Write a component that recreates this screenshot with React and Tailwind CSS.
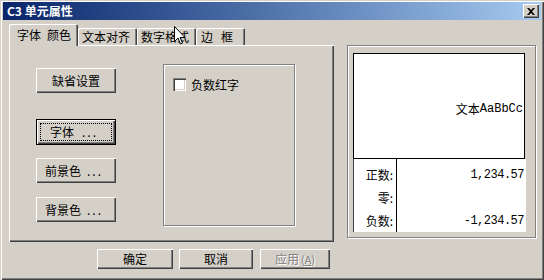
import React from "react";

const raised =
  "bg-[#d4d0c8] shadow-[inset_1px_1px_0_#ffffff,inset_-1px_-1px_0_#404040,inset_-2px_-2px_0_#808080]";
const cjk = "font-['Noto_Sans_CJK_SC','Noto_Sans_CJK_JP',sans-serif]";
const mono = "font-['Liberation_Mono',monospace]";

function Btn({ className = "", children, disabled }) {
  return (
    <div
      className={`${raised} flex items-center justify-center text-[12px] leading-none ${
        disabled ? "text-[#808080] [text-shadow:1px_1px_0_#ffffff]" : "text-black"
      } ${className}`}
    >
      {children}
    </div>
  );
}

function Tab({ children, active, className = "" }) {
  if (active) {
    return (
      <div
        className={`relative z-10 h-[22px] bg-[#d4d0c8] rounded-t-[2px] shadow-[inset_1px_1px_0_#ffffff,inset_-1px_0_0_#404040,inset_-2px_0_0_#808080] flex items-center pl-[8px] text-[12px] leading-none ${className}`}
      >
        {children}
      </div>
    );
  }
  return (
    <div
      className={`h-[17px] mb-[1px] bg-[#d4d0c8] rounded-t-[2px] shadow-[inset_1px_1px_0_#ffffff,inset_-1px_0_0_#404040,inset_-2px_0_0_#808080] flex items-center pl-[4px] text-[12px] leading-none ${className}`}
    >
      {children}
    </div>
  );
}

export default function App() {
  return (
    <div
      className={`relative w-[544px] h-[280px] bg-[#d4d0c8] pt-[2px] px-[3px] overflow-hidden text-black ${cjk} shadow-[inset_1px_1px_0_#d4d0c8,inset_2px_2px_0_#ffffff,inset_-1px_-1px_0_#404040,inset_-2px_-2px_0_#808080]`}
    >
      {/* title bar */}
      <div className="h-[18px] flex items-center justify-between bg-gradient-to-r from-[#0a246a] to-[#a6caf0] pl-[4px] pr-[2px]">
        <span className="text-white font-bold text-[12px] leading-none">C3 单元属性</span>
        <div className={`${raised} w-[16px] h-[14px] flex items-center justify-center`}>
          <svg width="8" height="7" viewBox="0 0 8 7">
            <path d="M0 0h2l2 2 2-2h2L5 3.5 8 7H6L4 5 2 7H0l3-3.5z" fill="#000" />
          </svg>
        </div>
      </div>

      <div className="flex items-start">
        {/* left: tab control */}
        <div className="ml-[6px] mt-[4px] flex flex-col">
          <div className="flex items-end h-[22px] -mb-[1px]">
            <Tab active className="w-[69px]">
              字体<span className="ml-[6px]">颜色</span>
            </Tab>
            <Tab className="w-[59px]">文本对齐</Tab>
            <Tab className="w-[59px]">数字格式</Tab>
            <Tab className="w-[49px] pl-[5px]">
              边<span className="ml-[8px]">框</span>
            </Tab>
          </div>
          <div className="w-[325px] h-[197px] bg-[#d4d0c8] shadow-[inset_1px_1px_0_#ffffff,inset_-1px_-1px_0_#404040,inset_-2px_-2px_0_#808080] flex">
            <div className="ml-[27px] mt-[23px] flex flex-col">
              <Btn className="w-[80px] h-[25px]">缺省设置</Btn>
              <div className="mt-[26px] w-[80px] h-[26px] border border-black">
                <div className={`${raised} w-full h-full p-[3px]`}>
                  <div className="w-full h-full border border-dotted border-black flex items-center pl-[9px] text-[12px] leading-none">
                    字体 <span className="ml-[8px] tracking-[2px]">...</span>
                  </div>
                </div>
              </div>
              <Btn className="mt-[13px] w-[80px] h-[25px] justify-start pl-[9px]">
                前景色 <span className="ml-[6px] tracking-[2px]">...</span>
              </Btn>
              <Btn className="mt-[14px] w-[80px] h-[25px] justify-start pl-[9px]">
                背景色 <span className="ml-[6px] tracking-[2px]">...</span>
              </Btn>
            </div>
            <div className="ml-[47px] mt-[19px] w-[132px] h-[162px] border border-[#808080] shadow-[inset_1px_1px_0_#ffffff,1px_1px_0_#ffffff]">
              <div className="flex items-center mt-[13px] ml-[9px]">
                <div className="w-[13px] h-[13px] bg-white shadow-[inset_1px_1px_0_#808080,inset_2px_2px_0_#404040,inset_-1px_-1px_0_#ffffff,inset_-2px_-2px_0_#d4d0c8]" />
                <span className="ml-[5px] text-[12px] leading-none">负数红字</span>
              </div>
            </div>
          </div>
        </div>

        {/* right: preview */}
        <div className="ml-[13px] mt-[25px] w-[189px] h-[193px] border border-[#808080] shadow-[inset_1px_1px_0_#ffffff,1px_1px_0_#ffffff] px-[5px] pt-[7px]">
          <div className="w-[172px] h-[106px] bg-white border border-black flex items-center justify-end pr-[1px] pt-[6px]">
            <span className="text-[12px] leading-none">文本</span>
            <span className={`${mono} text-[12px] leading-none`}>AaBbCc</span>
          </div>
          <div className="w-[173px] h-[73px] bg-white flex border-l border-[#404040]">
            <div className="w-[43px] border-r border-black flex flex-col items-end pr-[3px] pt-[4px]">
              <div className="h-[25px] flex items-center text-[12px] leading-none">正数:</div>
              <div className="h-[23px] flex items-center text-[12px] leading-none">零:</div>
              <div className="h-[23px] flex items-center text-[12px] leading-none">负数:</div>
            </div>
            <div className={`flex-1 flex flex-col items-end pr-[2px] pt-[4px] ${mono} text-[12px] tracking-[-0.5px] leading-none`}>
              <div className="h-[25px] flex items-center">1,234.57</div>
              <div className="h-[23px]" />
              <div className="h-[23px] flex items-center">-1,234.57</div>
            </div>
          </div>
        </div>
      </div>

      {/* bottom buttons */}
      <div className="flex mt-[7px] ml-[94px]">
        <Btn className="w-[76px] h-[20px]">确定</Btn>
        <Btn className="ml-[6px] w-[74px] h-[20px]">取消</Btn>
        <Btn className="ml-[7px] w-[70px] h-[20px]" disabled>
          应用<span className="ml-[2px] text-[11px]">(<u>A</u>)</span>
        </Btn>
      </div>

      {/* mouse pointer */}
      <svg className="absolute left-[174px] top-[26px]" width="12" height="20" viewBox="0 0 12 20">
        <path d="M0.5 0.5v15l3.5-3.5 2.5 6 2-1-2.5-5.5h5z" fill="#fff" stroke="#000" strokeWidth="1" />
      </svg>
    </div>
  );
}
